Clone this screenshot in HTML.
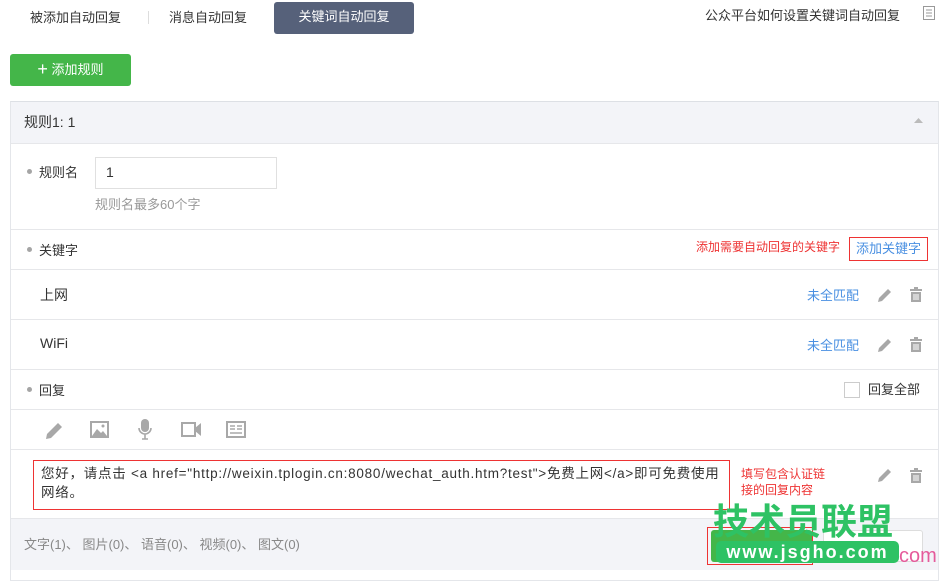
<!DOCTYPE html>
<html><head><meta charset="utf-8"><style>
*{margin:0;padding:0;box-sizing:border-box}
body{width:942px;height:570px;overflow:hidden;background:#fff;font-family:"Liberation Sans","Noto Sans CJK SC",sans-serif;font-size:13px;color:#333;position:relative}
.a{position:absolute;white-space:nowrap}
.panel{left:10px;top:101px;width:929px;height:480px;border:1px solid #e4e6ea;border-top:1px solid #dde0e5}
.line{position:absolute;left:11px;width:927px;height:1px;background:#e6e7ea}
.dot{display:inline-block;width:5px;height:5px;border-radius:50%;background:#a5a5a5;margin-right:7px;vertical-align:middle;position:relative;top:-2px}
.blue{color:#4a90e2}
.g{fill:#a8a8a8}
</style></head><body>
<div class="a" style="left:30px;top:7px;font-size:13px">被添加自动回复</div>
<div class="a" style="left:148px;top:11px;width:1px;height:13px;background:#ddd"></div>
<div class="a" style="left:169px;top:7px">消息自动回复</div>
<div class="a" style="left:274px;top:2px;width:140px;height:32px;background:#56617a;border-radius:3px;color:#fff;text-align:center;line-height:30px">关键词自动回复</div>
<div class="a" style="left:705px;top:5px">公众平台如何设置关键词自动回复</div>
<svg class="a" style="left:923px;top:6px" width="12" height="14"><rect x="0.5" y="0.5" width="11" height="13" fill="none" stroke="#999"/><path d="M3 4h6M3 7h6M3 10h6" stroke="#999"/></svg>
<div class="a" style="left:10px;top:54px;width:121px;height:32px;background:#44b649;border-radius:3px;color:#fff;line-height:30px;text-align:center;font-size:13px"><span style="font-size:18px;vertical-align:-1px">+</span> 添加规则</div>
<div class="a panel"></div>
<div class="a" style="left:11px;top:102px;width:927px;height:41px;background:#f3f4f8"></div>
<div class="a" style="left:24px;top:112px;font-size:14px">规则1: 1</div>
<svg class="a" style="left:914px;top:118px" width="9" height="6"><path d="M0 5L4.5 0L9 5Z" fill="#bbb"/></svg>
<div class="line" style="top:143px"></div>
<div class="a" style="left:27px;top:162px"><span class="dot"></span>规则名</div>
<div class="a" style="left:95px;top:157px;width:182px;height:32px;border:1px solid #e0e0e0;padding:6px 10px;font-size:14px">1</div>
<div class="a" style="left:95px;top:194px;color:#999">规则名最多60个字</div>
<div class="line" style="top:229px"></div>
<div class="a" style="left:27px;top:240px"><span class="dot"></span>关键字</div>
<div class="a" style="left:696px;top:238px;color:#e33;font-size:12px">添加需要自动回复的关键字</div>
<div class="a blue" style="left:849px;top:237px;width:79px;height:24px;border:1px solid #e33;text-align:center;line-height:22px">添加关键字</div>
<div class="line" style="top:269px"></div>
<div class="a" style="left:40px;top:285px;font-size:14px">上网</div>
<div class="line" style="top:319px"></div>
<div class="a" style="left:40px;top:335px;font-size:14px">WiFi</div>
<div class="a blue" style="left:807px;top:285px">未全匹配</div>
<div class="a blue" style="left:807px;top:335px">未全匹配</div>
<svg class="a" style="left:878px;top:288px" width="14" height="14"><path class="g" d="M0 14L1 10L10 1L13 4L4 13Z"/></svg>
<svg class="a" style="left:878px;top:338px" width="14" height="14"><path class="g" d="M0 14L1 10L10 1L13 4L4 13Z"/></svg>
<svg class="a" style="left:910px;top:287px" width="12" height="15"><path class="g" d="M0 2h12v2H0zM4 0h4v2H4zM1 5h10v10H1z"/><path d="M4 7v6M6 7v6M8 7v6" stroke="#fff"/></svg>
<svg class="a" style="left:910px;top:337px" width="12" height="15"><path class="g" d="M0 2h12v2H0zM4 0h4v2H4zM1 5h10v10H1z"/><path d="M4 7v6M6 7v6M8 7v6" stroke="#fff"/></svg>
<div class="line" style="top:369px"></div>
<div class="a" style="left:27px;top:380px"><span class="dot"></span>回复</div>
<div class="a" style="left:844px;top:382px;width:16px;height:16px;border:1px solid #ccc"></div>
<div class="a" style="left:868px;top:379px">回复全部</div>
<div class="line" style="top:409px"></div>
<svg class="a" style="left:46px;top:421px" width="18" height="18"><path class="g" d="M0 18L1 13L12 2L16 6L5 17Z"/></svg>
<svg class="a" style="left:90px;top:421px" width="19" height="17"><rect x="1" y="1" width="17" height="15" fill="none" stroke="#a8a8a8" stroke-width="2"/><path class="g" d="M2 15L7 8L11 12L13 10L17 15Z"/><circle class="g" cx="13" cy="5" r="1.5"/></svg>
<svg class="a" style="left:137px;top:419px" width="16" height="21"><rect class="g" x="4" y="0" width="8" height="13" rx="4"/><path d="M2 9a6 6 0 0 0 12 0M8 15v5M5 20h6" fill="none" stroke="#a8a8a8" stroke-width="1.6"/></svg>
<svg class="a" style="left:181px;top:422px" width="21" height="15"><rect x="1" y="1" width="13" height="13" fill="none" stroke="#a8a8a8" stroke-width="2"/><path class="g" d="M14 6L20 1V14L14 9Z"/></svg>
<svg class="a" style="left:226px;top:421px" width="20" height="17"><rect x="1" y="1" width="18" height="15" fill="none" stroke="#a8a8a8" stroke-width="2"/><path d="M4 5h5M4 8h5M11 5h5M11 8h5M4 12h12" stroke="#a8a8a8" stroke-width="1.6"/></svg>
<div class="line" style="top:449px"></div>
<div class="a" style="left:33px;top:460px;width:697px;height:50px;border:1px solid #e33;padding:3px 7px;line-height:19px;font-size:13.5px;letter-spacing:0.75px;white-space:normal;word-break:break-all">您好，请点击 &lt;a href="http://weixin.tplogin.cn:8080/wechat_auth.htm?test"&gt;免费上网&lt;/a&gt;即可免费使用网络。</div>
<div class="a" style="left:741px;top:466px;color:#e33;font-size:12px;line-height:16px">填写包含认证链<br>接的回复内容</div>
<svg class="a" style="left:878px;top:468px" width="14" height="14"><path class="g" d="M0 14L1 10L10 1L13 4L4 13Z"/></svg>
<svg class="a" style="left:910px;top:468px" width="12" height="15"><path class="g" d="M0 2h12v2H0zM4 0h4v2H4zM1 5h10v10H1z"/><path d="M4 7v6M6 7v6M8 7v6" stroke="#fff"/></svg>
<div class="a" style="left:11px;top:518px;width:927px;height:52px;background:#f3f4f8;border-top:1px solid #e6e7ea"></div>
<div class="a" style="left:24px;top:534px;color:#888">文字(1)、 图片(0)、 语音(0)、 视频(0)、 图文(0)</div>
<div class="a" style="left:707px;top:527px;width:106px;height:38px;border:1px solid #e33"></div>
<div class="a" style="left:711px;top:530px;width:101px;height:32px;background:#44b649;border-radius:3px"></div>
<div class="a" style="left:823px;top:530px;width:100px;height:32px;background:#fff;border:1px solid #ddd;border-radius:3px"></div>
<div class="a" style="left:713px;top:500px;font-size:36px;font-weight:bold;color:#2ec264;line-height:44px">技术员联盟</div>
<div class="a" style="left:716px;top:541px;width:183px;height:22px;background:#2ec264;border-radius:5px;color:#fff;font-weight:bold;font-size:18px;line-height:22px;text-align:center;letter-spacing:2px">www.jsgho.com</div>
<div class="a" style="left:899px;top:545px;color:#e55b9b;font-size:20px;line-height:22px">com</div>
</body></html>
